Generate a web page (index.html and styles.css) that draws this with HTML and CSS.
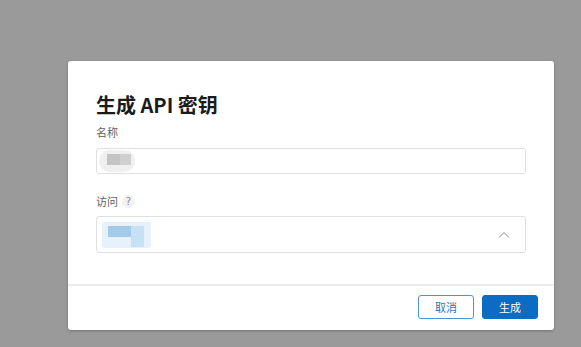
FILE: index.html
```html
<!DOCTYPE html>
<html lang="zh-CN">
<head>
<meta charset="utf-8">
<link rel="stylesheet" href="styles.css">
</head>
<body>
<div class="dialog">
  <div class="dialog-body">
    <h1 class="title">生成 API 密钥</h1>
    <div class="label">名称</div>
    <div class="input">
      <span class="blur-grey"><span class="blur-grey-a"></span><span class="blur-grey-b"></span></span>
    </div>
    <div class="label label-access">访问 <span class="help">?</span></div>
    <div class="select">
      <span class="chip"><span class="chip-a"></span><span class="chip-b"></span></span>
      <svg class="chevron" width="12" height="8" viewBox="0 0 12 8"><path d="M1 6.5 L6 1.5 L11 6.5" fill="none" stroke="#8a8a8a" stroke-width="1"/></svg>
    </div>
  </div>
  <div class="dialog-footer">
    <button class="btn btn-secondary">取消</button>
    <button class="btn btn-primary">生成</button>
  </div>
</div>
</body>
</html>
```

FILE: styles.css
```css
html, body {
  margin: 0;
  padding: 0;
}
body {
  background: #9a9a9a;
  width: 581px;
  height: 347px;
  overflow: hidden;
  font-family: "Noto Sans CJK SC", "Noto Sans", sans-serif;
  padding-top: 61px;
  box-sizing: border-box;
}
.dialog {
  margin-left: 68px;
  width: 486px;
  height: 269px;
  background: #ffffff;
  border-radius: 3px;
  box-shadow: 0 1px 3px rgba(0,0,0,0.25);
  display: flex;
  flex-direction: column;
}
.dialog-body {
  padding: 30px 28px 0 28px;
  flex: 1;
  display: flex;
  flex-direction: column;
}
.title {
  margin: 0;
  font-size: 20px;
  line-height: 28px;
  font-weight: 700;
  color: #1b1b1b;
}
.label {
  margin-top: 5px;
  font-size: 11px;
  line-height: 16px;
  color: #5f5f5f;
  display: flex;
  align-items: center;
  gap: 4px;
}
.label-access {
  margin-top: 19px;
}
.help {
  width: 13px;
  height: 13px;
  border-radius: 50%;
  background: #f2f2f2;
  color: #8a8a8a;
  font-size: 10px;
  line-height: 13px;
  text-align: center;
  font-family: "DejaVu Sans", sans-serif;
}
.input {
  margin-top: 8px;
  height: 26px;
  border: 1px solid #e0e0e0;
  border-radius: 3px;
  box-sizing: border-box;
  display: flex;
  align-items: center;
  padding-left: 2px;
}
.blur-grey {
  width: 36px;
  height: 22px;
  border-radius: 11px;
  background: #f0f0f0;
  display: flex;
  align-items: flex-start;
  padding: 4px 0 0 8px;
  box-sizing: border-box;
  filter: blur(0.6px);
}
.blur-grey-a {
  width: 13px;
  height: 11px;
  background: #c4c4c4;
}
.blur-grey-b {
  width: 11px;
  height: 11px;
  background: #cfcfcf;
}
.select {
  margin-top: 7px;
  height: 37px;
  border: 1px solid #e0e0e0;
  border-radius: 3px;
  box-sizing: border-box;
  display: flex;
  align-items: center;
  justify-content: space-between;
  padding: 0 15px 0 5px;
}
.chip {
  width: 49px;
  height: 26px;
  background: #e6f1fb;
  border-radius: 3px;
  display: flex;
  padding: 4px 0 0 6px;
  box-sizing: border-box;
  filter: blur(0.5px);
}
.chip-a {
  width: 23px;
  height: 11px;
  background: #a3cbe9;
}
.chip-b {
  width: 13px;
  height: 21px;
  background: #c6e0f5;
}
.chevron {
  display: block;
}
.dialog-footer {
  border-top: 2px solid #ededed;
  height: 46px;
  box-sizing: border-box;
  display: flex;
  justify-content: flex-end;
  align-items: center;
  gap: 8px;
  padding: 0 16px 2px 0;
}
.btn {
  width: 56px;
  height: 24px;
  border-radius: 3px;
  font-family: "Noto Sans CJK SC", sans-serif;
  font-size: 11px;
  line-height: 1;
  padding: 0;
  cursor: pointer;
}
.btn-secondary {
  background: #ffffff;
  border: 1px solid #4c93cf;
  color: #2b74b8;
}
.btn-primary {
  background: #0a6cc4;
  border: 1px solid #0a6cc4;
  color: #ffffff;
}
```
